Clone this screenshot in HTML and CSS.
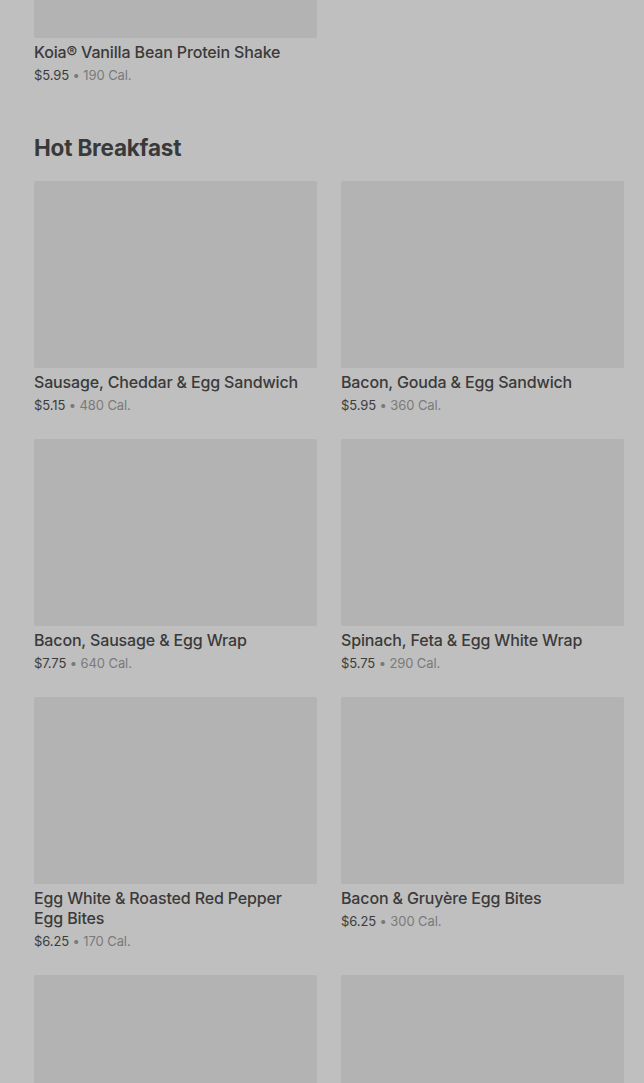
FILE: index.html
```html
<!DOCTYPE html>
<html lang="en">
<head>
  <meta charset="UTF-8">
  <meta name="viewport" content="width=device-width, initial-scale=1.0">
  <title>Menu</title>
  <link rel="stylesheet" href="styles.css">
</head>
<body>
  <div class="page">
    <section class="section first">
      <div class="grid">
        <div class="item">
          <div class="thumb"></div>
          <div class="name">Koia® Vanilla Bean Protein Shake</div>
          <div class="meta"><span class="price">$5.95</span> • 190 Cal.</div>
        </div>
      </div>
    </section>

    <section class="section">
      <h2>Hot Breakfast</h2>
      <div class="grid">
        <div class="item">
          <div class="thumb"></div>
          <div class="name">Sausage, Cheddar &amp; Egg Sandwich</div>
          <div class="meta"><span class="price">$5.15</span> • 480 Cal.</div>
        </div>
        <div class="item">
          <div class="thumb"></div>
          <div class="name">Bacon, Gouda &amp; Egg Sandwich</div>
          <div class="meta"><span class="price">$5.95</span> • 360 Cal.</div>
        </div>
        <div class="item">
          <div class="thumb"></div>
          <div class="name">Bacon, Sausage &amp; Egg Wrap</div>
          <div class="meta"><span class="price">$7.75</span> • 640 Cal.</div>
        </div>
        <div class="item">
          <div class="thumb"></div>
          <div class="name">Spinach, Feta &amp; Egg White Wrap</div>
          <div class="meta"><span class="price">$5.75</span> • 290 Cal.</div>
        </div>
        <div class="item">
          <div class="thumb"></div>
          <div class="name">Egg White &amp; Roasted Red Pepper Egg Bites</div>
          <div class="meta"><span class="price">$6.25</span> • 170 Cal.</div>
        </div>
        <div class="item">
          <div class="thumb"></div>
          <div class="name">Bacon &amp; Gruyère Egg Bites</div>
          <div class="meta"><span class="price">$6.25</span> • 300 Cal.</div>
        </div>
        <div class="item">
          <div class="thumb"></div>
        </div>
        <div class="item">
          <div class="thumb"></div>
        </div>
      </div>
    </section>
  </div>
</body>
</html>
```

FILE: styles.css
```css
html, body {
  margin: 0;
  height: 100%;
  overflow: hidden;
}
body {
  font-family: Inter, "Noto Sans", sans-serif;
  background-color: #bfbfbf;
  color: #3a3a3a;
}
.page {
  padding: 0 20px 0 34px;
  margin-top: -149px;
}
.section h2 {
  margin: 0 0 19px;
  font-size: 22.5px;
  line-height: 28px;
  font-weight: 700;
  letter-spacing: -0.2px;
  color: #393939;
}
.first {
  padding-bottom: 49px;
}
.grid {
  display: grid;
  grid-template-columns: repeat(2, 283px);
  column-gap: 24px;
  row-gap: 24px;
}
.thumb {
  height: 187px;
  background-color: #b3b3b3;
  border-radius: 2px;
}
.name {
  margin-top: 4px;
  padding-right: 12px;
  font-size: 16px;
  line-height: 20px;
  font-weight: 500;
  letter-spacing: -0.15px;
  color: #3a3a3a;
}
.meta {
  margin-top: 3px;
  font-size: 13px;
  line-height: 20px;
  letter-spacing: -0.1px;
  color: #7a7a7a;
}
.price {
  color: #3c3c3c;
}
```
